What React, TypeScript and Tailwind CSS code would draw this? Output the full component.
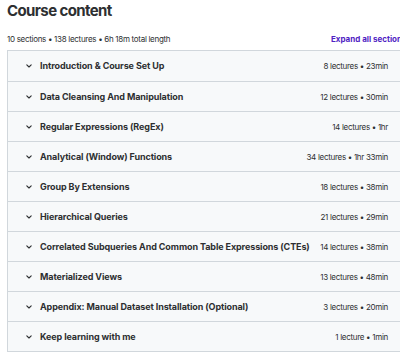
const sections = [
  { title: "Introduction & Course Set Up", meta: "8 lectures • 23min" },
  { title: "Data Cleansing And Manipulation", meta: "12 lectures • 30min" },
  { title: "Regular Expressions (RegEx)", meta: "14 lectures • 1hr" },
  { title: "Analytical (Window) Functions", meta: "34 lectures • 1hr 33min" },
  { title: "Group By Extensions", meta: "18 lectures • 38min" },
  { title: "Hierarchical Queries", meta: "21 lectures • 29min" },
  { title: "Correlated Subqueries And Common Table Expressions (CTEs)", meta: "14 lectures • 38min" },
  { title: "Materialized Views", meta: "13 lectures • 48min" },
  { title: "Appendix: Manual Dataset Installation (Optional)", meta: "3 lectures • 20min" },
  { title: "Keep learning with me", meta: "1 lecture • 1min" },
];

function Chevron() {
  return (
    <svg width="6" height="4" viewBox="0 0 6 4" fill="none" className="shrink-0">
      <path d="M0.8 0.8 L3 3 L5.2 0.8" stroke="#2d2f31" strokeWidth="1.1" strokeLinecap="round" strokeLinejoin="round" />
    </svg>
  );
}

export default function App() {
  return (
    <div className="w-[400px] h-[352px] overflow-hidden bg-white pl-[7px] font-['Inter',sans-serif] text-[#2d2f31]">
      <h2 className="pt-[1px] text-[15px] leading-[20px] font-bold tracking-[-0.6px]">Course content</h2>
      <div className="mt-[12px] flex h-[12px] items-center justify-between">
        <span className="text-[8px] tracking-[-0.3px]">10 sections • 138 lectures • 6h 18m total length</span>
        <span className="w-[69px] overflow-hidden whitespace-nowrap text-[8px] font-bold text-[#5022c3]">Expand all sections</span>
      </div>
      <div className="mt-[5px] w-[400px] border border-[#d1d7dc]">
        {sections.map((s, i) => (
          <div
            key={i}
            className={`flex h-[30px] items-center bg-[#f7f9fa] pl-[18px] pr-[18px] ${i > 0 ? "border-t border-[#d1d7dc]" : ""}`}
          >
            <Chevron />
            <span className="ml-[8px] flex-1 whitespace-nowrap text-[9px] font-bold tracking-[-0.1px]">{s.title}</span>
            <span className="ml-2 whitespace-nowrap text-[8px] tracking-[-0.3px]">{s.meta}</span>
          </div>
        ))}
      </div>
    </div>
  );
}
